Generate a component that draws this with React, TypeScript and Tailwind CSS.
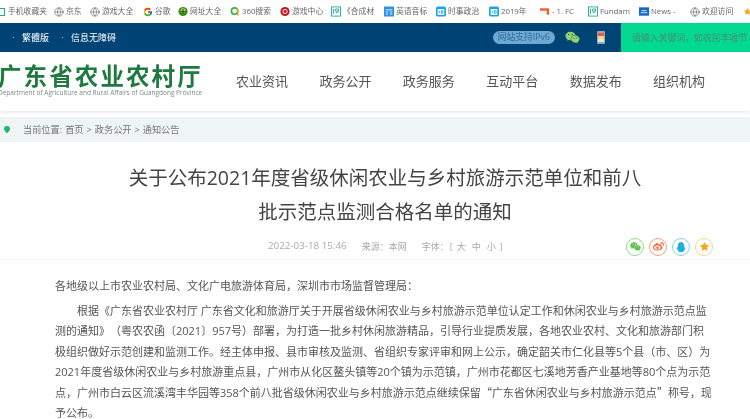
import { Globe, MapPin } from "lucide-react";
import { FaWeixin, FaWeibo, FaQq, FaStar } from "react-icons/fa";
import { FcGoogle } from "react-icons/fc";
import type { ReactNode } from "react";

const font = "font-['Open_Sans','Noto_Sans_CJK_SC',sans-serif]";
const cjk = "font-['Noto_Sans_CJK_SC',sans-serif]";

const globe = <Globe className="w-[10px] h-[10px] text-[#666]" strokeWidth={1.5} />;
const teal = (
  <svg viewBox="0 0 12 12" className="w-[11px] h-[11px]">
    <rect x="0.5" y="0.5" width="11" height="11" fill="#fff" stroke="#12a594" />
    <path d="M3 3v6M5.5 3h3.5v2.500H5.500zM5.500 7H9" stroke="#12a594" fill="none" />
  </svg>
);
const blueCal = (
  <svg viewBox="0 0 12 12" className="w-[11px] h-[11px]">
    <rect width="12" height="12" rx="2" fill="#1aa3f0" />
    <rect x="2" y="3" width="8" height="7" fill="#fff" />
    <path d="M4 5v3M6.500 5h2v3h-2z" stroke="#1aa3f0" fill="none" />
  </svg>
);

const bookmarks: { w: string; icon: ReactNode; t: string }[] = [
  { w: "w-[58px]", icon: <span className="block w-[7px] h-[8px] border border-[#19b36b]" />, t: "手机收藏夹" },
  { w: "w-[36px]", icon: globe, t: "京东" },
  { w: "w-[53px]", icon: globe, t: "游戏大全" },
  { w: "w-[35px]", icon: <FcGoogle className="w-[10px] h-[10px]" />, t: "谷歌" },
  {
    w: "w-[52px]",
    icon: (
      <svg viewBox="0 0 12 12" className="w-[11px] h-[11px]">
        <circle cx="6" cy="6" r="5.500" fill="#2f8f2a" />
        <circle cx="6" cy="5" r="3" fill="#f3d21b" />
        <path d="M3 6h6M6 3v6" stroke="#1c5f1c" strokeWidth="1.500" />
      </svg>
    ),
    t: "网址大全",
  },
  {
    w: "w-[50px]",
    icon: (
      <svg viewBox="0 0 12 12" className="w-[11px] h-[11px]">
        <circle cx="5.500" cy="5.500" r="3.800" fill="none" stroke="#33b24a" strokeWidth="2" />
        <path d="M8 2.500a4 4 0 0 1 1 5" stroke="#f5a623" fill="none" strokeWidth="2" />
        <circle cx="9.500" cy="10" r="1.200" fill="#f5a623" />
      </svg>
    ),
    t: "360搜索",
  },
  {
    w: "w-[51px]",
    icon: (
      <svg viewBox="0 0 12 12" className="w-[11px] h-[11px]">
        <circle cx="6" cy="6" r="5.500" fill="#c8161d" />
        <circle cx="6" cy="6" r="2.500" fill="none" stroke="#fff" strokeWidth="1.200" />
      </svg>
    ),
    t: "游戏中心",
  },
  { w: "w-[53px]", icon: teal, t: "《合成材" },
  {
    w: "w-[52px]",
    icon: (
      <svg viewBox="0 0 12 12" className="w-[11px] h-[11px]">
        <rect width="12" height="12" fill="#2d8fe6" />
        <path d="M2 4h8M2 6.500h3M7 6.500h3M2 9h3M7 9h3" stroke="#fff" />
      </svg>
    ),
    t: "英语音标",
  },
  { w: "w-[53px]", icon: blueCal, t: "时事政治" },
  { w: "w-[51px]", icon: blueCal, t: "2019年" },
  {
    w: "w-[48px]",
    icon: (
      <svg viewBox="0 0 12 12" className="w-[11px] h-[11px]">
        <path d="M0 2h11v8H8V5H0z" fill="#f0652f" />
      </svg>
    ),
    t: "- 1. FC",
  },
  { w: "w-[51px]", icon: teal, t: "Fundam" },
  {
    w: "w-[51px]",
    icon: (
      <svg viewBox="0 0 12 12" className="w-[11px] h-[11px]">
        <rect y="1" width="12" height="10" fill="#1667c9" />
        <path d="M2 7.500h8M3 5h6" stroke="#fff" />
      </svg>
    ),
    t: "News -",
  },
  { w: "w-[54px]", icon: globe, t: "欢迎访问" },
];

const nav = ["农业资讯", "政务公开", "政务服务", "互动平台", "数据发布", "组织机构"];

function ShareIcon({ border, color, children }: { border: string; color: string; children: ReactNode }) {
  return (
    <span className={`flex items-center justify-center w-[18px] h-[18px] rounded-full border ${border} ${color}`}>
      {children}
    </span>
  );
}

export default function App() {
  return (
    <div className={`w-[750px] h-[419px] overflow-hidden bg-white blur-[0.3px] [text-spacing-trim:space-all] ${font}`}>
      <div className="h-[23px] flex items-center ml-[-4px] text-[7.800px] text-[#666] whitespace-nowrap">
        {bookmarks.map((b) => (
          <div key={b.t} className={`${b.w} shrink-0 flex items-center gap-[2px] overflow-hidden`}>
            <span className="w-[10px] flex justify-center shrink-0">{b.icon}</span>
            <span className="overflow-hidden">{b.t}</span>
          </div>
        ))}
        <FaStar className="w-[7px] h-[7px] text-[#f5a623] shrink-0" />
      </div>

      <div className="h-[29px] bg-[#004476] flex items-center text-white text-[9px]">
        <div className="flex items-center pl-[13px] flex-1">
          <span className="w-[1px] h-[1px] bg-[#9fc0d8]" />
          <span className="ml-[8px]">繁體版</span>
          <span className="ml-[13px] w-[1px] h-[1px] bg-[#9fc0d8]" />
          <span className="ml-[8px]">信息无障碍</span>
        </div>
        <div className="flex items-center">
          <span className="h-[13px] px-[5px] rounded-full bg-[#6fa8d2] text-[#2e6f9f] text-[8.800px] leading-[13px] mr-[10px]">
            网站支持IPv6
          </span>
          <FaWeixin className="w-[15px] h-[13px] text-[#8fd36f] mr-[17px]" />
          <svg viewBox="0 0 8 13" className="w-[8px] h-[13px] mr-[16px]">
            <rect width="8" height="13" rx="1" fill="#9aa7ae" />
            <rect x="1" y="2" width="6" height="3" fill="#e8564a" />
            <rect x="1" y="5" width="6" height="3" fill="#f1d97a" />
            <rect x="1" y="8" width="6" height="3" fill="#dfe5e8" />
          </svg>
        </div>
        <div className="w-[129px] h-full bg-[#00d98f] text-[#4f8a73] text-[8.900px] flex items-center pl-[11px] whitespace-nowrap overflow-hidden">
          请输入关键词，如农民丰收节
        </div>
      </div>

      <header className="h-[59px] flex items-start shadow-[0_2px_3px_rgba(0,0,0,0.08)] relative">
        <div className="w-[238px] shrink-0 ml-[-2px]">
          <div className="text-[23.500px] leading-[24px] mt-[12px] font-bold text-[#1e7a3f] tracking-[2.100px] whitespace-nowrap">
            广东省农业农村厅
          </div>
          <div className="text-[6.500px] leading-[8px] mt-[1px] text-[#7d8a82] whitespace-nowrap">
            Department of Agriculture and Rural Affairs of Guangdong Province
          </div>
        </div>
        <nav className="flex gap-[31.400px] mt-[20px] text-[13px] leading-[18px] text-[#555]">
          {nav.map((n) => (
            <span key={n} className="whitespace-nowrap">{n}</span>
          ))}
        </nav>
      </header>

      <div className="mt-[6px] h-[25px] bg-[#eef5f4] flex items-center pl-[3px] text-[9.200px] text-[#777]">
        <MapPin className="w-[8px] h-[9px] text-[#1fb56f] fill-[#1fb56f]" />
        <span className="ml-[12px] [word-spacing:0.6px]">当前位置: 首页 &gt; 政务公开 &gt; 通知公告</span>
      </div>

      <h1 className="mt-[19px] mx-auto w-[530px] text-center text-[19.500px] leading-[34px] text-[#444] font-normal translate-x-[10px]">
        关于公布2021年度省级休闲农业与乡村旅游示范单位和前八
        <br />
        批示范点监测合格名单的通知
      </h1>

      <div className="mt-[5px] h-[26px] pl-[268px] pr-[37px] flex items-center text-[9px] text-[#aaa] border-b border-[#f5f5f5]">
        <span className="text-[9.800px]">2022-03-18 15:46</span>
        <span className="ml-[15px]">来源：本网</span>
        <span className="ml-[15px]">字体：</span>
        <span className="ml-[1px] flex gap-[6px]">
          <span>[</span>
          <span className="ml-[-2px]">大</span>
          <span>中</span>
          <span>小</span>
          <span className="ml-[-2px]">]</span>
        </span>
        <div className="ml-auto flex gap-[5px]">
          <ShareIcon border="border-[#8fdc84]" color="text-[#5cc24f]"><FaWeixin className="w-[11px] h-[11px]" /></ShareIcon>
          <ShareIcon border="border-[#f5a27e]" color="text-[#ee6a3c]"><FaWeibo className="w-[11px] h-[11px]" /></ShareIcon>
          <ShareIcon border="border-[#7fd4f2]" color="text-[#19b0e6]"><FaQq className="w-[10px] h-[10px]" /></ShareIcon>
          <ShareIcon border="border-[#fbd58a]" color="text-[#f5a623]"><FaStar className="w-[9px] h-[9px]" /></ShareIcon>
        </div>
      </div>

      <article className="mt-[16px] pl-[55px] w-[725px] text-[11px] leading-[20.200px] text-[#555]">
        <p>各地级以上市农业农村局、文化广电旅游体育局，深圳市市场监督管理局：</p>
        <p className="mt-[5px] indent-[22px]">
          根据《广东省农业农村厅 广东省文化和旅游厅关于开展省级休闲农业与乡村旅游示范单位认定工作和休闲农业与乡村旅游示范点监
          <br />
          测的通知》（粤农农函〔2021〕957号）部署，为打造一批乡村休闲旅游精品，引导行业提质发展，各地农业农村、文化和旅游部门积
          <br />
          极组织做好示范创建和监测工作。经主体申报、县市审核及监测、省组织专家评审和网上公示，确定韶关市仁化县等5个县（市、区）为
          <br />
          2021年度省级休闲农业与乡村旅游重点县，广州市从化区鳌头镇等20个镇为示范镇，广州市花都区七溪地芳香产业基地等80个点为示范
          <br />
          点，广州市白云区流溪湾丰华园等358个前八批省级休闲农业与乡村旅游示范点继续保留<span className={cjk}>“</span>广东省休闲农业与乡村旅游示范点<span className={cjk}>”</span>称号，现
          <br />
          予公布。
        </p>
      </article>
    </div>
  );
}
